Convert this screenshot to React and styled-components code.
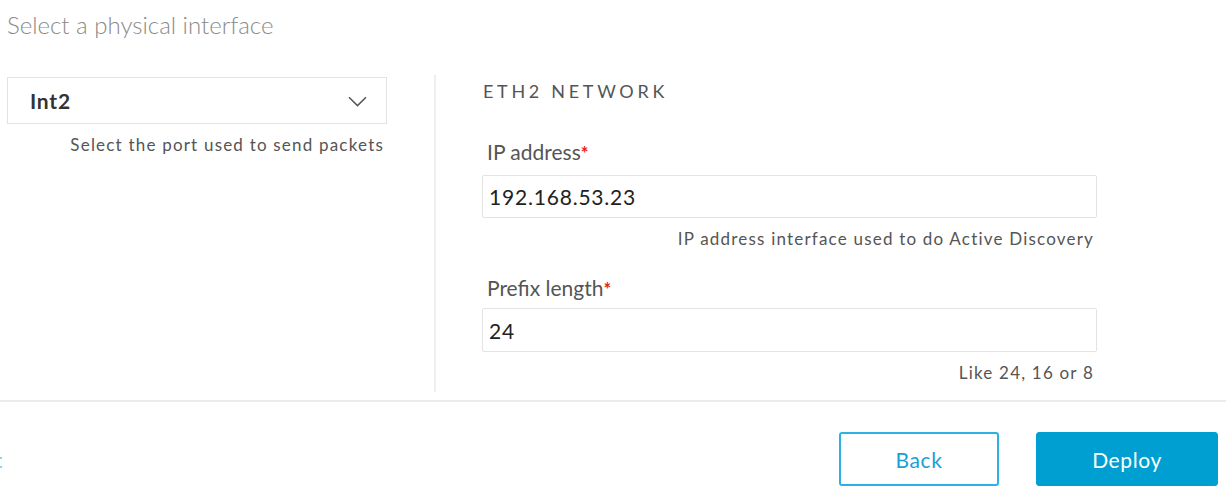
import styled, { createGlobalStyle } from "styled-components";

const GlobalStyle = createGlobalStyle`
  html, body {
    margin: 0;
    padding: 0;
    background: #ffffff;
    font-family: "Lato", "Open Sans", sans-serif;
  }
`;

const ChevronDown = () => (
  <svg width="19" height="11" viewBox="0 0 19 11" fill="none">
    <path d="M1 1.2 L9.5 9.6 L18 1.2" stroke="#555" strokeWidth="1.5" />
  </svg>
);

const App = () => {
  return (
    <Page>
      <GlobalStyle />
      <Title>Select a physical interface</Title>
      <Body>
        <LeftColumn>
          <SelectBox>
            <SelectValue>Int2</SelectValue>
            <ChevronWrap>
              <ChevronDown />
            </ChevronWrap>
          </SelectBox>
          <Hint $top={11}>Select the port used to send packets</Hint>
        </LeftColumn>
        <Divider />
        <RightColumn>
          <SectionTitle>ETH2 NETWORK</SectionTitle>
          <Label $top={37}>
            IP address<Required>*</Required>
          </Label>
          <Field $top={11} $height={43}>
            192.168.53.23
          </Field>
          <Hint $top={11}>IP address interface used to do Active Discovery</Hint>
          <Label $top={27}>
            Prefix length<Required>*</Required>
          </Label>
          <Field $top={8} $height={44}>
            24
          </Field>
          <Hint $top={11}>Like 24, 16 or 8</Hint>
        </RightColumn>
      </Body>
      <Footer>
        <CutDots />
        <Buttons>
          <OutlineButton>Back</OutlineButton>
          <PrimaryButton>Deploy</PrimaryButton>
        </Buttons>
      </Footer>
    </Page>
  );
};

const Page = styled.div`
  width: 1226px;
  height: 496px;
  overflow: hidden;
  background: #fff;
`;

const Title = styled.div`
  padding: 11px 0 0 7px;
  font-size: 24px;
  line-height: 28px;
  font-weight: 300;
  color: #8a8a8a;
`;

const Body = styled.div`
  display: flex;
  margin-top: 36px;
  padding-left: 7px;
  padding-bottom: 8px;
`;

const LeftColumn = styled.div`
  width: 380px;
  padding-top: 2px;
  display: flex;
  flex-direction: column;
`;

const SelectBox = styled.div`
  box-sizing: border-box;
  height: 47px;
  border: 1px solid #e3e3e3;
  display: flex;
  align-items: center;
  justify-content: space-between;
  padding: 0 19px 0 22px;
`;

const SelectValue = styled.span`
  font-size: 21px;
  font-weight: 700;
  letter-spacing: 0.8px;
  color: #333;
`;

const ChevronWrap = styled.span`
  display: flex;
  margin-top: 2px;
`;

const Hint = styled.div`
  margin-top: ${(p) => p.$top}px;
  height: 20px;
  font-size: 17px;
  line-height: 20px;
  letter-spacing: 1.2px;
  color: #555;
  text-align: right;
  padding-right: 3px;
`;

const Divider = styled.div`
  width: 2px;
  background: #efefef;
  margin: 0 46px 0 47px;
`;

const RightColumn = styled.div`
  width: 615px;
  display: flex;
  flex-direction: column;
  padding-bottom: 9px;
`;

const SectionTitle = styled.div`
  margin-top: 4px;
  padding-left: 1px;
  height: 24px;
  font-size: 18px;
  line-height: 24px;
  letter-spacing: 3.7px;
  color: #555;
`;

const Label = styled.div`
  margin-top: ${(p) => p.$top}px;
  height: 24px;
  padding-left: 5px;
  font-size: 21px;
  line-height: 24px;
  color: #555;
`;

const Required = styled.span`
  color: #e2231a;
  font-weight: 700;
  font-size: 18px;
  line-height: 0;
`;

const Field = styled.div`
  box-sizing: border-box;
  margin-top: ${(p) => p.$top}px;
  height: ${(p) => p.$height}px;
  border: 1px solid #e3e3e3;
  border-radius: 2px;
  display: flex;
  align-items: center;
  padding-left: 6px;
  font-size: 21px;
  letter-spacing: 0.8px;
  color: #222;
`;

const Footer = styled.div`
  border-top: 2px solid #ebebeb;
  display: flex;
  justify-content: space-between;
  align-items: flex-start;
  padding: 30px 8px 0 0;
`;

const CutDots = styled.span`
  width: 2px;
  height: 2px;
  margin-top: 25px;
  background: #8fd3ee;
  box-shadow: 0 9px 0 #8fd3ee;
`;

const Buttons = styled.div`
  display: flex;
  gap: 37px;
`;

const BaseButton = styled.button`
  box-sizing: border-box;
  height: 54px;
  border-radius: 3px;
  font-family: "Lato", "Open Sans", sans-serif;
  font-size: 21px;
  letter-spacing: 0.6px;
  cursor: pointer;
`;

const OutlineButton = styled(BaseButton)`
  width: 160px;
  background: #fff;
  border: 2px solid #2ab2e4;
  color: #1a9fd6;
`;

const PrimaryButton = styled(BaseButton)`
  width: 182px;
  background: #009fd2;
  border: 1px solid #009fd2;
  color: #fff;
`;

export default App;
